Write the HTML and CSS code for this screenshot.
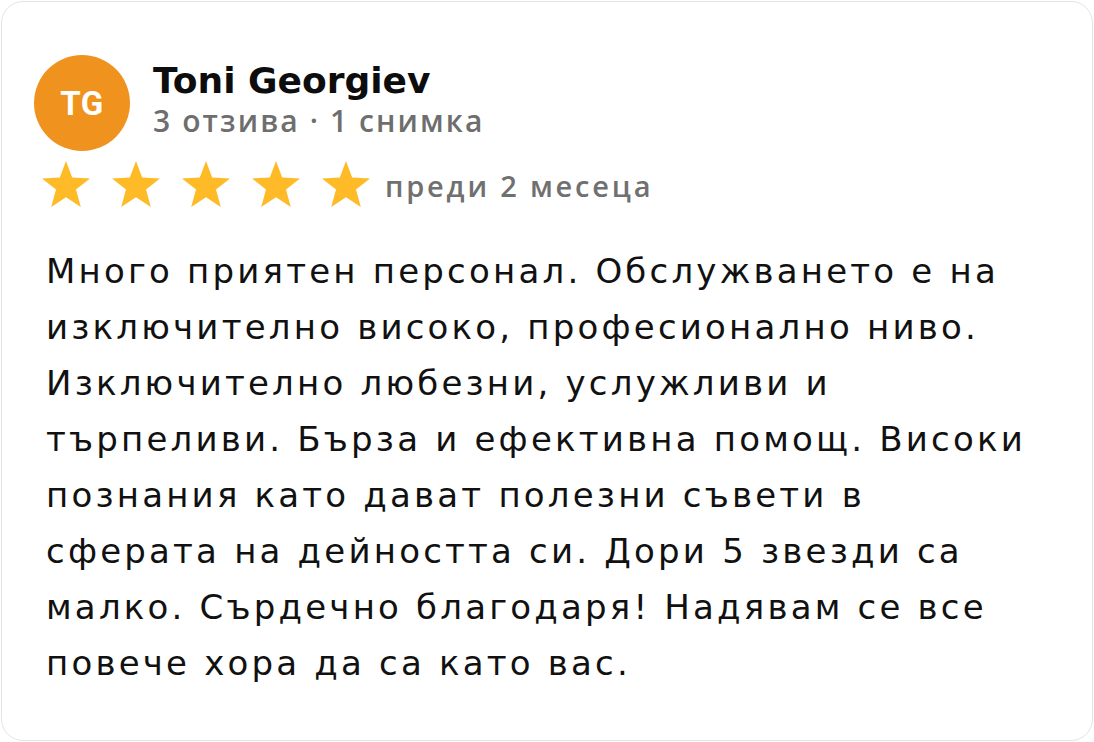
FILE: index.html
```
<!DOCTYPE html>
<html lang="bg">
<head>
<meta charset="utf-8">
<title>Отзив</title>
<link rel="stylesheet" href="styles.css">
</head>
<body>
<div class="card">
  <div class="header">
    <div class="avatar">TG</div>
    <div class="who">
      <div class="name">Toni Georgiev</div>
      <div class="meta">3 отзива · 1 снимка</div>
    </div>
  </div>
  <div class="rating">
    <div class="stars">
      <svg class="star" viewBox="0 0 50 48"><polygon points="25,1 31.2,17.6 49,18.4 35,29.6 39.8,47 25,37.2 10.2,47 15,29.6 1,18.4 18.8,17.6"/></svg>
      <svg class="star" viewBox="0 0 50 48"><polygon points="25,1 31.2,17.6 49,18.4 35,29.6 39.8,47 25,37.2 10.2,47 15,29.6 1,18.4 18.8,17.6"/></svg>
      <svg class="star" viewBox="0 0 50 48"><polygon points="25,1 31.2,17.6 49,18.4 35,29.6 39.8,47 25,37.2 10.2,47 15,29.6 1,18.4 18.8,17.6"/></svg>
      <svg class="star" viewBox="0 0 50 48"><polygon points="25,1 31.2,17.6 49,18.4 35,29.6 39.8,47 25,37.2 10.2,47 15,29.6 1,18.4 18.8,17.6"/></svg>
      <svg class="star" viewBox="0 0 50 48"><polygon points="25,1 31.2,17.6 49,18.4 35,29.6 39.8,47 25,37.2 10.2,47 15,29.6 1,18.4 18.8,17.6"/></svg>
    </div>
    <div class="when">преди 2 месеца</div>
  </div>
  <p class="text">Много приятен персонал. Обслужването е на изключително високо, професионално ниво. Изключително любезни, услужливи и търпеливи. Бърза и ефективна помощ. Високи познания като дават полезни съвети в сферата на дейността си. Дори 5 звезди са малко. Сърдечно благодаря! Надявам се все повече хора да са като вас.</p>
</div>
</body>
</html>
```
FILE: styles.css
```
html, body {
  margin: 0;
  background: #ffffff;
}
body {
  padding: 1px;
}
.card {
  box-sizing: border-box;
  width: 1092px;
  height: 740px;
  border: 1px solid #e4e4e4;
  border-radius: 22px;
  background: #ffffff;
  padding: 53px 32px 0 32px;
  font-family: "DejaVu Sans", sans-serif;
  color: #111111;
}
.header {
  display: flex;
  align-items: flex-start;
  gap: 23px;
}
.avatar {
  flex: none;
  width: 96px;
  height: 96px;
  border-radius: 50%;
  background: #f0921e;
  color: #ffffff;
  font-family: Roboto, "Liberation Sans", sans-serif;
  font-weight: 700;
  font-size: 33px;
  letter-spacing: 0.5px;
  display: flex;
  align-items: center;
  justify-content: center;
}
.who {
  padding-top: 5px;
}
.name {
  font-weight: 700;
  font-size: 36px;
  line-height: 41px;
  color: #0d0d0d;
}
.meta {
  margin-top: 2px;
  font-family: "Open Sans", sans-serif;
  font-weight: 600;
  font-size: 30px;
  line-height: 36px;
  letter-spacing: 2.1px;
  color: #6e6e6e;
}
.rating {
  display: flex;
  align-items: flex-start;
  gap: 14px;
  margin: 9px 0 0 7px;
}
.stars {
  display: flex;
  gap: 20px;
}
.star {
  display: block;
  width: 50px;
  height: 48px;
  fill: #ffba27;
}
.when {
  margin-top: 8px;
  font-family: "Open Sans", sans-serif;
  font-weight: 600;
  font-size: 29px;
  line-height: 36px;
  letter-spacing: 2.8px;
  color: #707070;
}
.text {
  margin: 35px 0 0 0;
  padding: 0 8px 0 12px;
  font-size: 34px;
  line-height: 56px;
  letter-spacing: 3.2px;
  color: #111111;
}
```
